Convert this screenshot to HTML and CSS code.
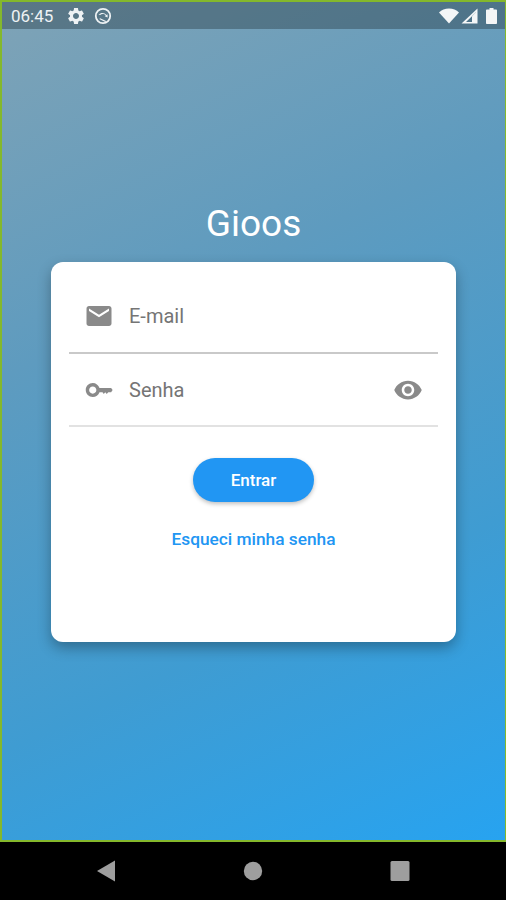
FILE: index.html
```html
<!DOCTYPE html>
<html lang="en">
<head>
    <meta charset="UTF-8">
    <meta name="viewport" content="width=device-width, initial-scale=1.0">
    <title>Gioos</title>
    <link rel="stylesheet" href="styles.css">
</head>
<body>
    <div class="screen">
        <div class="statusBar">
            <span class="clock">06:45</span>
            <svg class="statusIcon" width="20" height="20" viewBox="0 0 24 24"><path d="M19.14 12.94c.04-.3.06-.61.06-.94 0-.32-.02-.64-.07-.94l2.03-1.58c.18-.14.23-.41.12-.61l-1.92-3.32c-.12-.22-.37-.29-.59-.22l-2.39.96c-.5-.38-1.03-.7-1.62-.94l-.36-2.54c-.04-.24-.24-.41-.48-.41h-3.84c-.24 0-.43.17-.47.41l-.36 2.54c-.59.24-1.13.57-1.62.94l-2.39-.96c-.22-.08-.47 0-.59.22L2.74 8.87c-.12.21-.08.47.12.61l2.03 1.58c-.05.3-.09.63-.09.94s.02.64.07.94l-2.03 1.58c-.18.14-.23.41-.12.61l1.92 3.32c.12.22.37.29.59.22l2.39-.96c.5.38 1.03.7 1.62.94l.36 2.54c.05.24.24.41.48.41h3.84c.24 0 .44-.17.47-.41l.36-2.54c.59-.24 1.13-.56 1.62-.94l2.39.96c.22.08.47 0 .59-.22l1.92-3.32c.12-.22.07-.47-.12-.61l-2.01-1.58zM12 15.6c-1.98 0-3.6-1.62-3.6-3.6s1.62-3.6 3.6-3.6 3.6 1.62 3.6 3.6-1.62 3.6-3.6 3.6z"/></svg>
            <svg class="statusIcon syncIcon" width="18" height="18" viewBox="0 0 18 18"><circle cx="9" cy="9" r="7.2" fill="none" stroke="#eef2f4" stroke-width="1.8"/><path d="M4.500 7.600c2.600-2.400 6-2 8 .4l1-.8.2 3.400-3-1.400 1-.7c-1.400-1.600-3.800-2-5.600-.4zM6.200 11.200l6.400 3-1.400.9-6-3z"/></svg>
            <div class="statusRight">
                <svg width="20" height="16" viewBox="0 0 20 16"><path d="M0 4.6C2.6 2 6 .6 10 .6s7.4 1.4 10 4L10 15.6z"/></svg>
                <svg width="17" height="16" viewBox="0 0 17 16"><path d="M16.5 .5v15H.5zM15 4.2 5 14h10z" fill-rule="evenodd"/><path d="M11 8.2 15 4.2V14h-4z"/></svg>
                <svg class="battery" width="11" height="16" viewBox="0 0 11 16"><path d="M3.5 0h4v1.5H10c.5 0 1 .4 1 1V15c0 .6-.5 1-1 1H1c-.5 0-1-.4-1-1V2.500c0-.6.5-1 1-1h2.500z"/></svg>
            </div>
        </div>
        <div class="content">
            <h1 class="appName">Gioos</h1>
            <div class="card">
                <div class="field">
                    <svg class="fieldIcon" width="30" height="30" viewBox="0 0 24 24"><path d="M20 4H4c-1.100 0-1.990.9-1.990 2L2 18c0 1.100.9 2 2 2h16c1.100 0 2-.9 2-2V6c0-1.100-.9-2-2-2zm0 4-8 5-8-5V6l8 5 8-5v2z"/></svg>
                    <span class="fieldLabel">E-mail</span>
                </div>
                <div class="field fieldLight">
                    <svg class="fieldIcon" width="30" height="30" viewBox="0 0 24 24"><path d="M12.400 10.400C11.600 8 9.500 6.400 7 6.400c-3.100 0-5.600 2.500-5.600 5.600s2.500 5.600 5.600 5.600c2.500 0 4.600-1.600 5.400-3.800h2.400l1 1.400 1.200-1.400 1.200 1.400 1.200-1.400h2.300l1.200-1.800-1.200-1.600H12.400zM7 14.900c-1.600 0-2.900-1.300-2.900-2.900S5.400 9.100 7 9.100 9.900 10.400 9.900 12 8.600 14.900 7 14.900z"/></svg>
                    <span class="fieldLabel">Senha</span>
                    <svg class="eyeIcon" width="30" height="30" viewBox="0 0 24 24"><path d="M12 4.500C7 4.500 2.730 7.610 1 12c1.730 4.390 6 7.500 11 7.500s9.270-3.110 11-7.500c-1.730-4.390-6-7.500-11-7.500zM12 17c-2.760 0-5-2.240-5-5s2.240-5 5-5 5 2.240 5 5-2.240 5-5 5zm0-8c-1.660 0-3 1.340-3 3s1.340 3 3 3 3-1.340 3-3-1.340-3-3-3z"/></svg>
                </div>
                <button class="loginBtn" type="button">Entrar</button>
                <a class="forgotLink" href="#">Esqueci minha senha</a>
            </div>
        </div>
    </div>
    <div class="navBar">
        <svg width="20" height="22" viewBox="0 0 20 22"><path d="M19 .5v21L1 11z"/></svg>
        <svg width="20" height="22" viewBox="0 0 20 22"><circle cx="10" cy="11" r="9.200"/></svg>
        <svg width="20" height="22" viewBox="0 0 20 22"><rect x=".5" y="1" width="19" height="20" rx="1.500"/></svg>
    </div>
</body>
</html>
```

FILE: styles.css
```css
body {
    font-family: Roboto, "Liberation Sans", sans-serif;
    margin: 0;
    height: 900px;
    display: flex;
    flex-direction: column;
    overflow: hidden;
    background-color: #000;
}

.screen {
    flex: 1;
    display: flex;
    flex-direction: column;
    border: 2px solid #84b82c;
    border-right-width: 1px;
    background: linear-gradient(155deg, #7fa3b6 0%, #5e9bbf 35%, #3f9cd2 70%, #27a3f0 100%);
}

.statusBar {
    height: 27px;
    display: flex;
    align-items: center;
    padding: 0 8px 0 9px;
    background-color: rgba(40, 60, 70, 0.42);
    color: #eef2f4;
}

.clock {
    font-size: 17px;
    width: 55px;
}

.statusIcon {
    fill: #eef2f4;
}

.syncIcon {
    margin-left: 8px;
}

.statusRight {
    margin-left: auto;
    display: flex;
    align-items: center;
    gap: 2px;
}

.statusRight svg {
    fill: #f4f6f7;
}

.statusRight .battery {
    margin-left: 6px;
}

.content {
    flex: 1;
    display: flex;
    flex-direction: column;
    align-items: center;
}

.appName {
    font-size: 37px;
    font-weight: 400;
    line-height: 42px;
    color: #fff;
    margin: 174px 0 17px;
}

.card {
    width: 369px;
    height: 362px;
    padding: 18px 18px 0;
    background-color: #fff;
    border-radius: 12px;
    box-shadow: 0 6px 14px rgba(0, 0, 0, 0.3);
    display: flex;
    flex-direction: column;
    align-items: center;
}

.field {
    align-self: stretch;
    height: 72px;
    display: flex;
    align-items: center;
    padding: 0 15px;
    border-bottom: 2px solid #c9c9c9;
}

.fieldLight {
    height: 71px;
    border-bottom-color: #e2e2e2;
}

.fieldIcon {
    fill: #8a8a8a;
    flex: none;
}

.fieldLabel {
    font-size: 20px;
    color: #757575;
    margin-left: 15px;
}

.eyeIcon {
    fill: #8a8a8a;
    margin-left: auto;
}

.loginBtn {
    width: 121px;
    height: 44px;
    margin-top: 31px;
    border: none;
    border-radius: 22px;
    background-color: #2196f3;
    color: #fff;
    font-family: inherit;
    font-size: 17px;
    font-weight: 500;
    box-shadow: 0 2px 4px rgba(0, 0, 0, 0.25);
}

.forgotLink {
    margin-top: 27px;
    font-size: 17.300px;
    font-weight: 500;
    color: #2196f3;
    text-decoration: none;
}

.navBar {
    height: 58px;
    display: flex;
    align-items: center;
    background-color: #000;
    padding: 0 96px;
    justify-content: space-between;
}

.navBar svg {
    fill: #9e9e9e;
}
```
